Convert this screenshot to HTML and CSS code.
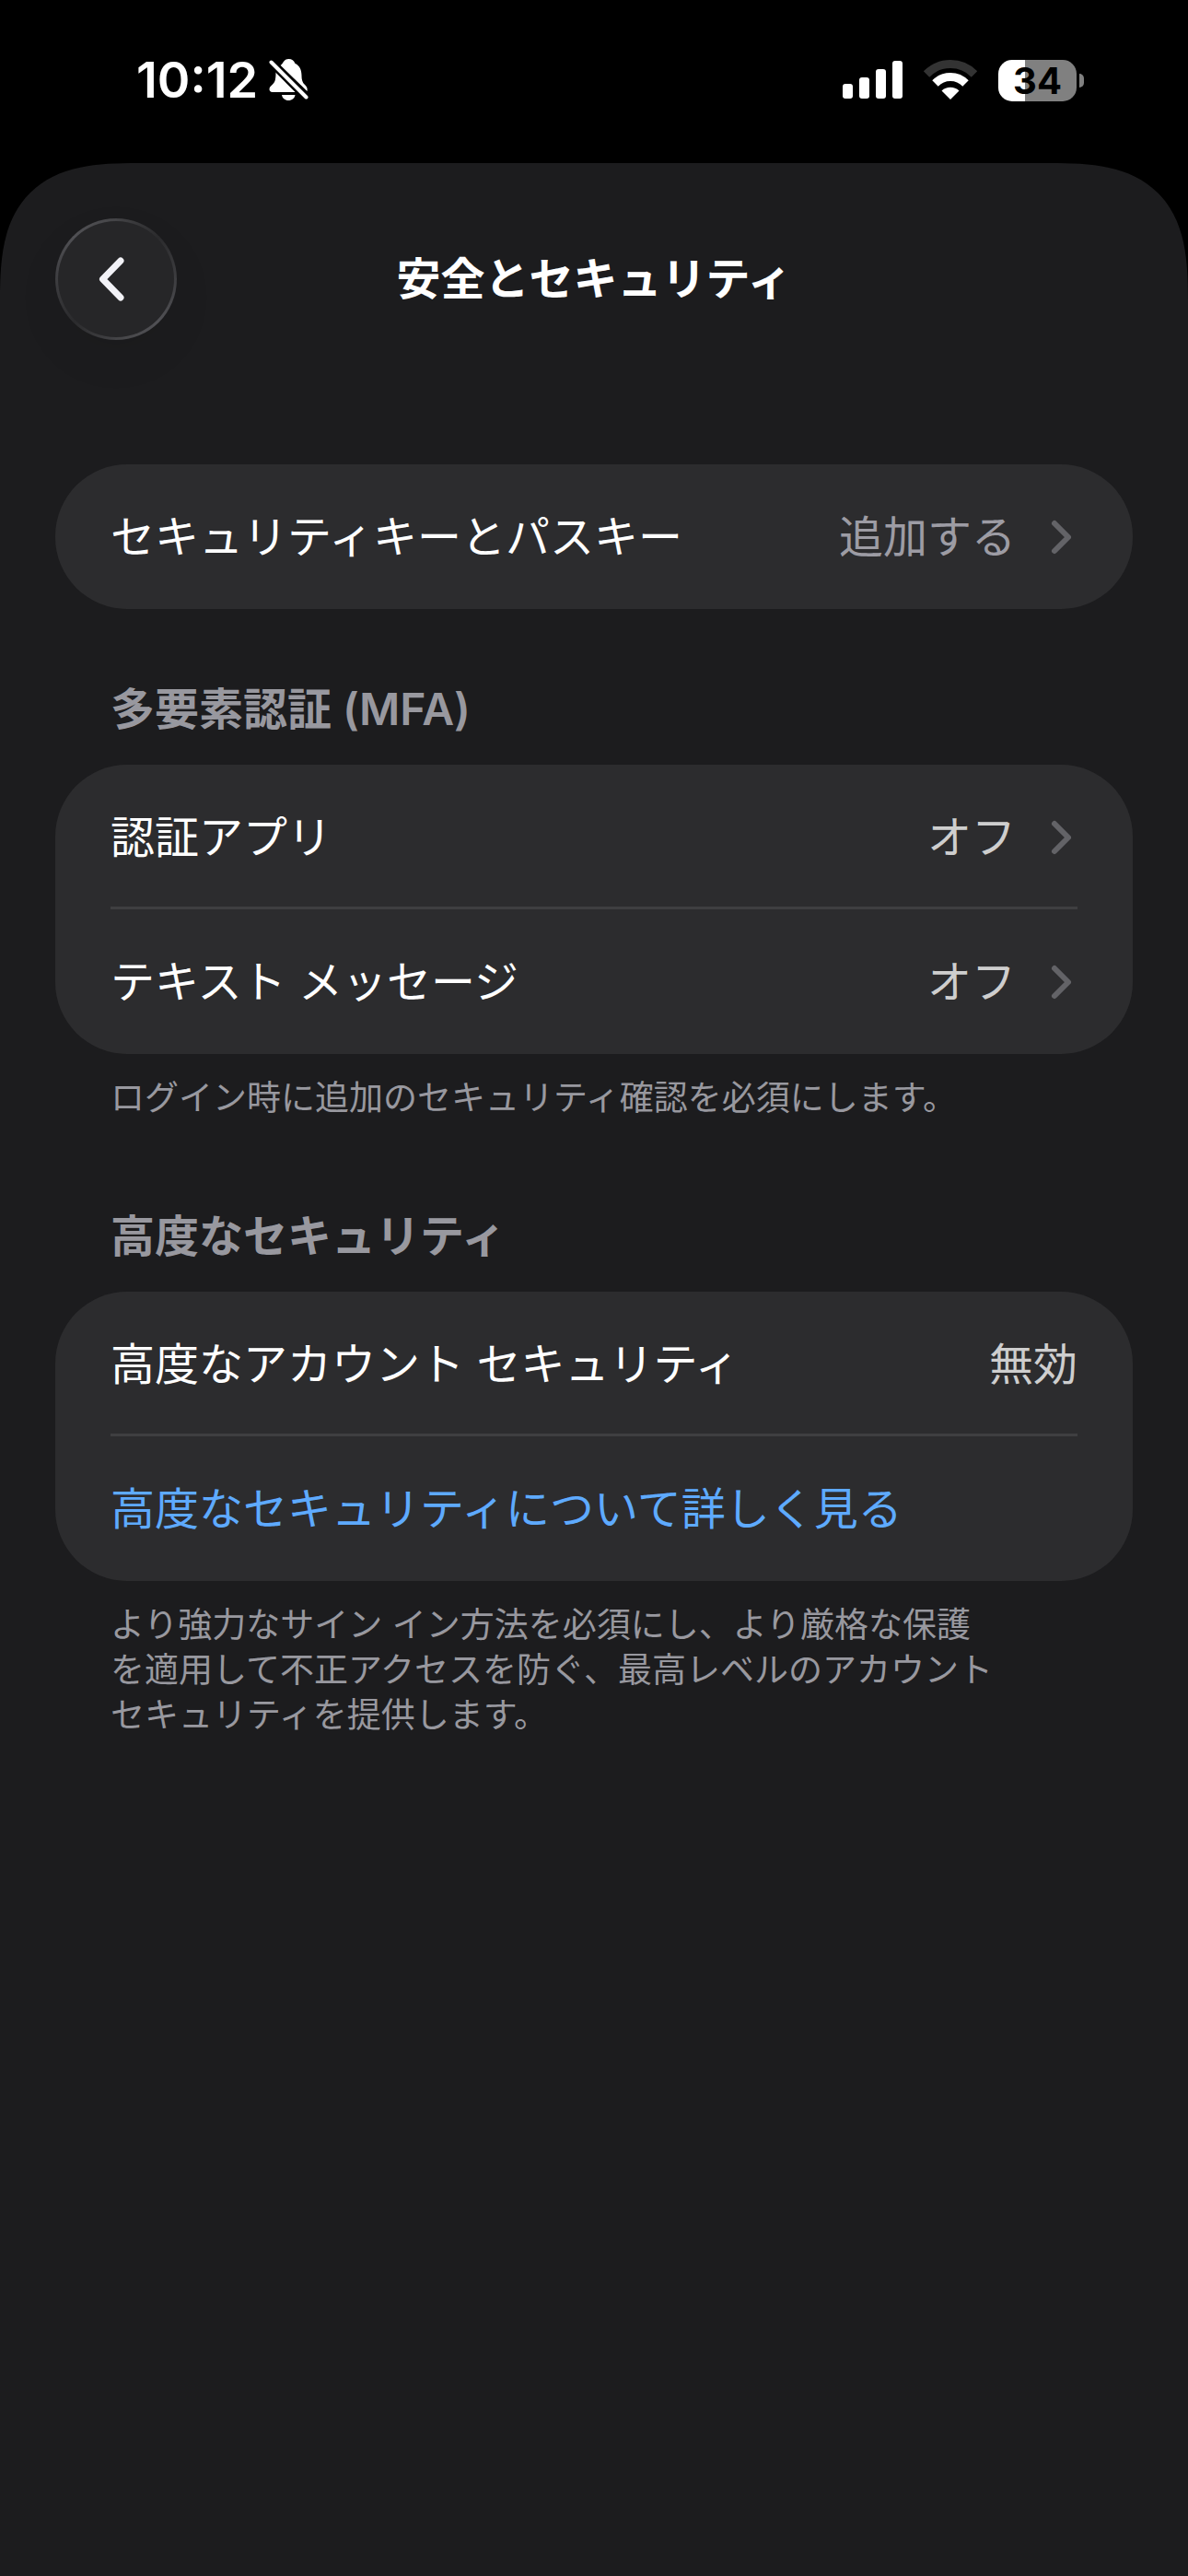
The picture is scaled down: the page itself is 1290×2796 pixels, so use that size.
FILE: index.html
```html
<!DOCTYPE html>
<html lang="ja">
<head>
    <meta charset="UTF-8">
    <meta name="viewport" content="width=device-width, initial-scale=1.0">
    <title>安全とセキュリティ</title>
    <link rel="stylesheet" href="styles.css">
</head>
<body>
    <!-- status bar -->
    <div class="status-bar">
        <div class="status-left">
            <span class="clock">10:12</span>
            <svg class="bell" width="44" height="48" viewBox="0 0 44 48" fill="#fff">
                <path d="M12.5 8 C14.5 6.5 15 5.5 15.5 4.500 C17 2 19 1 21.500 1 C25 1 27 2.500 28.500 6 C33 8 35.500 12.500 35.500 19 C35.500 25 37 27 39.500 29.500 C41.500 31.500 42 33.500 41.500 36 Z"/>
                <path d="M7.500 15 L29 37 H4 C1.500 37 0.500 35.500 0.500 34 C0.500 31.500 2 30.500 4.500 28 C7 25.500 7.500 22 7.500 15 Z"/>
                <path d="M14 40 H28.500 C28 43.500 25 46 21.200 46 C17.500 46 14.500 43.500 14 40 Z"/>
                <path d="M2.500 4.500 L40.500 42.500" stroke="#000" stroke-width="9"/>
                <path d="M2.500 4.500 L40.500 42.500" stroke="#fff" stroke-width="4" stroke-linecap="round"/>
            </svg>
        </div>
        <div class="status-right">
            <svg width="65" height="42" viewBox="0 0 65 42" fill="#fff">
                <rect x="0" y="25" width="11" height="16" rx="3"/>
                <rect x="18" y="18" width="11" height="23" rx="3"/>
                <rect x="36" y="9" width="11" height="32" rx="3"/>
                <rect x="54" y="0" width="11" height="41" rx="3"/>
            </svg>
            <svg width="60" height="44" viewBox="0 0 60 44" fill="none">
                <path d="M4 15.500 A36.500 36.500 0 0 1 56 15.500" stroke="#333" stroke-width="9"/>
                <path d="M13.500 25.500 A23 23 0 0 1 46.500 25.500" stroke="#fff" stroke-width="9"/>
                <path d="M20.500 33.500 A14 14 0 0 1 39.500 33.500 L30 43 Z" fill="#fff"/>
            </svg>
            <div class="battery"><span class="battery-level">34</span></div>
        </div>
    </div>

    <div class="sheet">
        <header class="nav">
            <button class="back-btn" aria-label="戻る">
                <svg width="36" height="52" viewBox="0 0 36 52" fill="none" stroke="#f2f2f7" stroke-width="7" stroke-linecap="round" stroke-linejoin="round">
                    <path d="M27 6 L7.500 26 L27 46"/>
                </svg>
            </button>
            <h1 class="nav-title">安全とセキュリティ</h1>
        </header>

        <main class="content">
            <section class="group">
                <div class="card">
                    <button class="row">
                        <span class="row-label">セキュリティキーとパスキー</span>
                        <span class="row-value muted">追加する</span>
                        <svg class="chevron" viewBox="0 0 30 40"><path d="M5 5 L20 20 L5 35"/></svg>
                    </button>
                </div>
            </section>

            <section class="group">
                <h2 class="group-title">多要素認証 (MFA)</h2>
                <div class="card">
                    <button class="row">
                        <span class="row-label">認証アプリ</span>
                        <span class="row-value">オフ</span>
                        <svg class="chevron" viewBox="0 0 30 40"><path d="M5 5 L20 20 L5 35"/></svg>
                    </button>
                    <button class="row">
                        <span class="row-label">テキスト メッセージ</span>
                        <span class="row-value">オフ</span>
                        <svg class="chevron" viewBox="0 0 30 40"><path d="M5 5 L20 20 L5 35"/></svg>
                    </button>
                </div>
                <p class="group-note">ログイン時に追加のセキュリティ確認を必須にします。</p>
            </section>

            <section class="group">
                <h2 class="group-title">高度なセキュリティ</h2>
                <div class="card">
                    <div class="row">
                        <span class="row-label">高度なアカウント セキュリティ</span>
                        <span class="row-value">無効</span>
                    </div>
                    <a class="row row-link" href="#">高度なセキュリティについて詳しく見る</a>
                </div>
                <p class="group-note">より強力なサイン イン方法を必須にし、より厳格な保護を適用して不正アクセスを防ぐ、最高レベルのアカウント セキュリティを提供します。</p>
            </section>
        </main>
    </div>
</body>
</html>
```

FILE: styles.css
```css
* {
    box-sizing: border-box;
}
body {
    margin: 0;
    min-height: 100vh;
    display: flex;
    flex-direction: column;
    background-color: #000;
    color: #fff;
    font-family: Inter, "Noto Sans CJK JP", sans-serif;
    font-size: 48px;
    line-height: 60px;
}
h1, h2, p {
    margin: 0;
}
svg {
    display: block;
    flex-shrink: 0;
}

/* status bar */
.status-bar {
    display: flex;
    justify-content: space-between;
    height: 177px;
    padding: 56px 113px 0 148px;
}
.status-left, .status-right {
    display: flex;
    align-items: center;
    height: 62px;
}
.status-left {
    gap: 12px;
}
.status-right {
    gap: 22px;
}
.clock {
    font-size: 54px;
    font-weight: 600;
}
.battery {
    position: relative;
    width: 85px;
    height: 45px;
    margin-right: 8px;
    border-radius: 15px;
    background: linear-gradient(to right, #fff 34%, #808080 34%);
    color: #000;
    text-align: center;
}
.battery::after {
    content: "";
    position: absolute;
    top: 15px;
    right: -8px;
    width: 5px;
    height: 15px;
    border-radius: 0 8px 8px 0;
    background-color: #808080;
}
.battery-level {
    display: block;
    font-size: 40px;
    font-weight: 700;
    line-height: 45px;
}

/* sheet */
.sheet {
    flex: 1;
    padding: 60px;
    border-radius: 114px 114px 0 0;
    background-color: #1c1c1e;
}
@supports (corner-shape: superellipse(1.5)) {
    .sheet {
        border-radius: 150px 150px 0 0;
        corner-shape: superellipse(1.5);
    }
}
.nav {
    display: grid;
    grid-template-columns: 132px 1fr 132px;
    align-items: center;
    margin-bottom: 135px;
}
.nav-title {
    font-size: 48px;
    font-weight: 600;
    text-align: center;
}
.back-btn {
    display: flex;
    align-items: center;
    justify-content: center;
    width: 132px;
    height: 132px;
    padding: 0 8px 0 0;
    border: 3px solid transparent;
    border-radius: 50%;
    /* rim light on the top left and bottom right */
    background:
        linear-gradient(#262628, #262628) padding-box,
        conic-gradient(from 45deg, #2b2b2d, #505054 25%, #48484b 35%, #2b2b2d 50%, #505054 75%, #48484b 85%, #2b2b2d) border-box;
    box-shadow: 0 20px 50px rgba(0, 0, 0, 0.06);
    cursor: pointer;
}

/* settings groups */
.group + .group {
    margin-top: 79px;
}
.group-title {
    margin: 0 60px 30px;
    color: #98989f;
    font-size: 48px;
    font-weight: 600;
}
.card {
    padding: 0 60px;
    border-radius: 78px;
    background-color: #2c2c2e;
}
.row {
    display: flex;
    align-items: center;
    gap: 37px;
    width: 100%;
    height: 157px;
    padding: 0;
    border: none;
    background: none;
    color: #fff;
    font: inherit;
    text-align: left;
}
button.row {
    cursor: pointer;
}
/* divider */
.row:not(:last-child) {
    box-shadow: inset 0 -3px #3f3f41;
}
.row-label {
    flex: 1;
}
.row-value {
    color: #cecece;
}
.row-value.muted {
    color: #9d9ca4;
}
.row-link {
    color: #5eaaff;
    text-decoration: none;
}
.chevron {
    width: 30px;
    height: 40px;
    fill: none;
    stroke: #636367;
    stroke-width: 6;
    stroke-linecap: round;
    stroke-linejoin: round;
}
.group-note {
    margin: 23px 60px 96px;
    padding-right: 84px;
    color: #98989f;
    font-size: 37px;
    line-height: 49px;
}
```
